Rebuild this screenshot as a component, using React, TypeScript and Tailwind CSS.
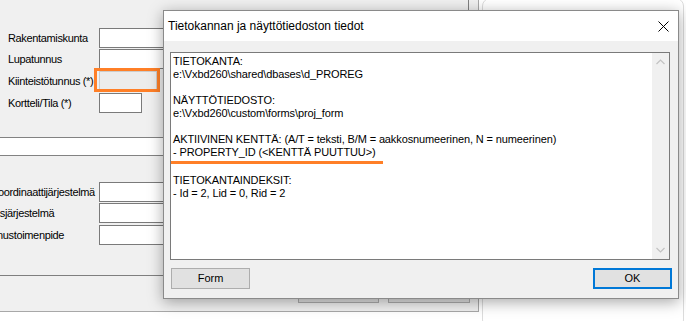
import React from "react";

const font = { fontFamily: '"Liberation Sans", Arial, sans-serif' };

function Row({ label, children, className = "" }: { label: string; children: React.ReactNode; className?: string }) {
  return (
    <div className={`flex items-center h-[20px] ${className}`}>
      <div className="w-[99px] pl-[8px] text-[11px] tracking-[-0.35px] text-black whitespace-nowrap">{label}</div>
      {children}
    </div>
  );
}

function ClipRow({ label, shift, className = "" }: { label: string; shift: string; className?: string }) {
  return (
    <div className={`flex items-center h-[20px] ${className}`}>
      <div className="w-[99px] overflow-hidden text-[11px] tracking-[-0.35px] text-black whitespace-nowrap">
        <span className={`block ${shift}`}>{label}</span>
      </div>
      <div className="h-[20px] w-[120px] bg-white border border-[#7a7a7a]" />
    </div>
  );
}

export default function App() {
  const lines: (string | null)[] = [
    "TIETOKANTA:",
    "e:\\Vxbd260\\shared\\dbases\\d_PROREG",
    "",
    "NÄYTTÖTIEDOSTO:",
    "e:\\Vxbd260\\custom\\forms\\proj_form",
    "",
    "AKTIIVINEN KENTTÄ: (A/T = teksti, B/M = aakkosnumeerinen, N = numeerinen)",
    "- PROPERTY_ID (<KENTTÄ PUUTTUU>)",
    null,
    "TIETOKANTAINDEKSIT:",
    "- Id = 2, Lid = 0, Rid = 2",
  ];
  return (
    <div className="relative w-[686px] h-[321px] bg-white overflow-hidden" style={font}>
      {/* right background window */}
      <div className="absolute left-[482px] top-[-2px] w-[202px] h-[330px] bg-white border border-[#dcdcdc] rounded-[8px]" />

      {/* left background window */}
      <div className="absolute left-0 top-0 w-[479px] h-[312px] bg-[#f0f0f0] border-r border-b border-[#a8a8a8] overflow-hidden flex flex-col">
        <div className="w-[469px] h-[276px] shrink-0 border-r border-b border-[#7f7f7f] flex flex-col pt-[28px]">
          <Row label="Rakentamiskunta">
            <div className="h-[20px] w-[120px] bg-white border border-[#7a7a7a]" />
          </Row>
          <Row label="Lupatunnus" className="mt-[1px]">
            <div className="h-[20px] w-[120px] bg-white border border-[#7a7a7a]" />
          </Row>
          <Row label="Kiinteistötunnus (*)" className="mt-[2px]">
            <div className="relative h-[20px] w-[58px] bg-[#ececec] border border-[#cccccc]">
              <div className="absolute -left-[6px] -top-[4px] w-[66px] h-[24px] border-[3px] border-[#ff7f27]" />
            </div>
          </Row>
          <Row label="Kortteli/Tila (*)" className="mt-[2px]">
            <div className="h-[20px] w-[43px] bg-white border border-[#7a7a7a]" />
          </Row>
          <div className="mt-[24px] h-[19px] w-full bg-white border-y border-[#828282]" />
          <ClipRow label="Tasokoordinaattijärjestelmä" shift="-ml-[29px]" className="mt-[26px]" />
          <ClipRow label="Korkeusjärjestelmä" shift="-ml-[33px]" className="mt-[1px]" />
          <ClipRow label="Rakennustoimenpide" shift="-ml-[33px]" className="mt-[2px]" />
        </div>
        <div className="flex justify-end gap-[9px] pr-[8px] mt-[3px]">
          <div className="w-[81px] h-[24px] bg-[#e1e1e1] border border-[#adadad]" />
          <div className="w-[82px] h-[24px] bg-[#e1e1e1] border border-[#adadad]" />
        </div>
      </div>

      {/* dialog */}
      <div className="absolute left-[163px] top-[10px] w-[516px] h-[289px] border border-[#8a8a8a] bg-[#f0f0f0] shadow-[0_3px_14px_rgba(0,0,0,0.35)] flex flex-col">
        <div className="h-[30px] bg-white flex items-center justify-between pl-[4px] pr-[9px]">
          <span className="text-[12px] text-black">Tietokannan ja näyttötiedoston tiedot</span>
          <svg width="11" height="11" viewBox="0 0 11 11">
            <path d="M0.5 0.5 L10.5 10.5 M10.5 0.5 L0.5 10.5" stroke="#000" strokeWidth="1" />
          </svg>
        </div>
        <div className="flex flex-col px-[6px] pt-[11px]">
          <div className="h-[208px] w-[500px] bg-white border border-[#7a7a7a] flex">
            <div className="flex-1 pl-[2px] pt-[2px] text-[11px] leading-[13px] tracking-[-0.12px] text-black">
              {lines.map((l, i) =>
                l === null ? (
                  <div key={i} className="h-[13px]">
                    <div className="mt-[2px] h-[3px] w-[212px] -ml-[2px] bg-[#ff7f27]" />
                  </div>
                ) : (
                  <div key={i} className="h-[13px] whitespace-nowrap">{l}</div>
                )
              )}
            </div>
            <div className="w-[17px] bg-[#f0f0f0] flex flex-col justify-between items-center py-[6px]">
              <svg width="9" height="6" viewBox="0 0 9 6">
                <path d="M0.5 5 L4.5 1 L8.5 5" stroke="#c2c2c2" strokeWidth="1.2" fill="none" />
              </svg>
              <svg width="9" height="6" viewBox="0 0 9 6">
                <path d="M0.5 1 L4.5 5 L8.5 1" stroke="#c2c2c2" strokeWidth="1.2" fill="none" />
              </svg>
            </div>
          </div>
          <div className="flex justify-between mt-[8px] pl-[1px]">
            <div className="w-[79px] h-[21px] bg-[#e1e1e1] border border-[#adadad] flex items-center justify-center text-[11px] text-black">Form</div>
            <div className="w-[79px] h-[21px] bg-[#e1e1e1] border-2 border-[#0078d7] flex items-center justify-center text-[11px] text-black">OK</div>
          </div>
        </div>
      </div>
    </div>
  );
}
